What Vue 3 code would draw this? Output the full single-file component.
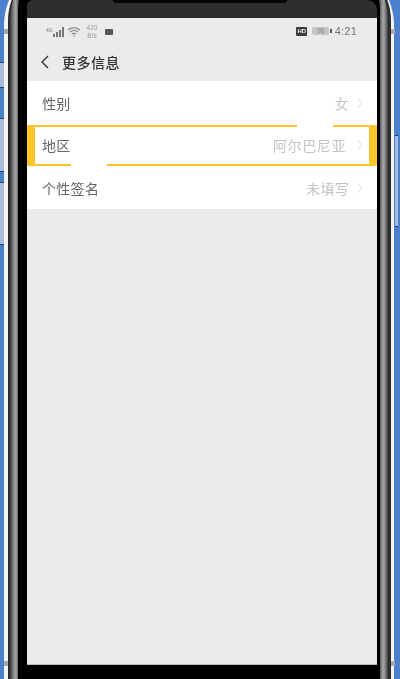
<script setup>
const rows = [
  { label: '性别', value: '女', cls: 'first' },
  { label: '地区', value: '阿尔巴尼亚', cls: 'hi' },
  { label: '个性签名', value: '未填写', cls: 'last' },
]
</script>

<template>
  <div class="stage">
    <div class="white-band">
      <div class="dark-band">
        <div class="metal">
          <div class="bezel">
            <div class="device">
              <div class="topband"><div class="notch"></div></div>
              <div class="screen">
                <div class="status">
                  <div class="status-left">
                    <svg class="signal" width="18" height="10" viewBox="0 0 18 10">
                      <text x="0" y="4.5" class="tiny">4G</text>
                      <rect x="7" y="7" width="2" height="3" fill="#777" />
                      <rect x="10" y="5" width="2" height="5" fill="#777" />
                      <rect x="13" y="3" width="2" height="7" fill="#777" />
                      <rect x="16" y="0" width="2" height="10" fill="#777" />
                    </svg>
                    <svg class="wifi" width="14" height="10" viewBox="0 0 14 10" fill="none" stroke="#777" stroke-width="1.1">
                      <path d="M1 3 Q7 -1.5 13 3" />
                      <path d="M3 5 Q7 2 11 5" />
                      <path d="M5 7 Q7 5.6 9 7" />
                      <circle cx="7" cy="9" r="0.7" fill="#777" stroke="none" />
                    </svg>
                    <div class="speed"><span>420</span><span>B/s</span></div>
                    <div class="square"></div>
                  </div>
                  <div class="status-right">
                    <span class="hd">HD</span>
                    <span class="battery"><span class="level">98</span><i class="cap"></i></span>
                    <span class="time">4:21</span>
                  </div>
                </div>
                <div class="nav">
                  <svg class="back" width="10" height="14" viewBox="0 0 10 14" fill="none" stroke="#333" stroke-width="1.4">
                    <path d="M8 1 L2 7 L8 13" />
                  </svg>
                  <span class="title">更多信息</span>
                </div>
                <div class="list">
                  <div v-for="r in rows" :key="r.label" class="row" :class="r.cls">
                    <span class="label">{{ r.label }}</span>
                    <span class="value">{{ r.value }}</span>
                    <svg class="chev" width="7" height="12" viewBox="0 0 7 12" fill="none" stroke="#d8d8d8" stroke-width="1">
                      <path d="M1 1 L6 6 L1 11" />
                    </svg>
                    <template v-if="r.cls === 'hi'">
                      <i class="gap gap-top"></i>
                      <i class="gap gap-bottom"></i>
                    </template>
                  </div>
                </div>
              </div>
            </div>
          </div>
        </div>
      </div>
    </div>
    <i class="tick tick-lt"></i>
    <i class="tick tick-lb"></i>
    <i class="tick tick-rt"></i>
    <i class="tick tick-rb"></i>
    <i class="panel p1"></i>
    <i class="panel p2"></i>
    <i class="panel p3"></i>
    <i class="panel p4"></i>
  </div>
</template>

<style>
html, body { margin: 0; background: #000; }
</style>

<style scoped>
.stage {
  width: 400px;
  height: 679px;
  overflow: hidden;
  position: relative;
  background: #4a80cc;
  padding: 0 6px 0 4px;
  box-sizing: border-box;
  font-family: "Noto Sans CJK SC", "Liberation Sans", sans-serif;
}
.white-band {
  margin-top: -40px;
  height: 780px;
  background: #f4f4f4;
  padding: 0 3px 0 4px;
  border-radius: 65px 65px 0 0;
}
.dark-band {
  height: 100%;
  background: #2c2c2c;
  padding: 0 3px 0 2px;
  border-radius: 61px 61px 0 0;
}
.metal {
  height: 100%;
  background: linear-gradient(90deg, #3a3a3a 0, #8f8f8f 4px, #a8a8a8 6px, #5a5a5a 8px, #5a5a5a calc(100% - 8px), #a8a8a8 calc(100% - 5px), #8a8a8a calc(100% - 3px), #3a3a3a 100%);
  padding: 0 8px;
  border-radius: 59px 59px 0 0;
}
.bezel {
  height: 100%;
  background: #000;
  padding: 0 3px 0 9px;
  border-radius: 50px 50px 0 0;
}
.device {
  padding-top: 40px;
  width: 350px;
}
.topband {
  height: 18px;
  background: #2e2e2e;
  position: relative;
  border-radius: 6px 10px 0 0;
}
.notch {
  position: absolute;
  left: 86px;
  top: 0;
  width: 174px;
  height: 3px;
  background: #050505;
  border-radius: 0 0 6px 6px;
}
.screen {
  width: 350px;
  height: 647px;
  background: #ebebeb;
  border-bottom: 1px solid #bbb;
  box-sizing: border-box;
}
.status {
  height: 26px;
  padding: 6px 20px 0 19px;
  box-sizing: border-box;
  display: flex;
  justify-content: space-between;
  align-items: flex-start;
  filter: blur(0.35px);
}
.status-left, .status-right {
  display: flex;
  align-items: center;
}
.status-left { gap: 3px; }
.tiny { font-size: 5px; fill: #777; font-family: "Liberation Sans", sans-serif; }
.speed {
  display: flex;
  flex-direction: column;
  font-family: "Liberation Sans", sans-serif;
  font-size: 6.5px;
  line-height: 8px;
  color: #999;
  margin-left: 1px;
  width: 14px;
  align-items: center;
}
.square {
  width: 8px;
  height: 6px;
  background: #555;
  margin-left: 3px;
  border-radius: 1px;
}
.status-right { gap: 5px; font-family: "Liberation Sans", sans-serif; }
.hd {
  background: #3a3a3a;
  color: #eee;
  font-size: 6px;
  font-weight: 700;
  line-height: 9px;
  width: 11px;
  text-align: center;
  border-radius: 1px;
}
.battery { display: flex; align-items: center; }
.level {
  width: 17px;
  height: 8px;
  background: #c4c4c4;
  border-radius: 2px;
  color: #888;
  font-size: 6.5px;
  line-height: 8px;
  text-align: center;
}
.cap { width: 1.5px; height: 4px; background: #555; margin-left: 1px; }
.time { font-size: 11px; line-height: 14px; color: #777; letter-spacing: 0.2px; margin-left: -2px; }
.nav {
  height: 36px;
  display: flex;
  align-items: center;
  padding-left: 13px;
  gap: 12px;
  box-sizing: border-box;
  filter: blur(0.35px);
}
.title {
  font-size: 14px;
  font-weight: 500;
  color: #333;
  letter-spacing: 0.5px;
}
.list { margin-top: 1px; }
.row {
  background: #fff;
  display: flex;
  align-items: center;
  padding: 0 14px 1px 15px;
  box-sizing: border-box;
  position: relative;
  color: #666;
  font-size: 14px;
}
.row.first { height: 44px; }
.row.last { height: 43px; padding-bottom: 0; }
.row.hi {
  height: 41px;
  border: 2px solid #fdc42b;
  border-left-width: 8px;
  border-right-width: 8px;
  border-radius: 2px;
  padding: 0 6px 1px 7px;
}
.label { flex: 1; letter-spacing: 0.3px; filter: blur(0.3px); }
.value { color: #c4c4c4; letter-spacing: 0.3px; margin-right: 7px; filter: blur(0.3px); }
.hi .value { letter-spacing: 0.6px; margin-right: 10px; }
.chev { flex: none; }
.gap {
  position: absolute;
  height: 3px;
  background: #fff;
  width: 36px;
}
.gap-top { top: -3px; right: 36px; }
.gap-bottom { bottom: -3px; left: 36px; }
.tick {
  position: absolute;
  width: 4px;
  height: 5px;
  background: #a8a8ae;
}
.tick-lt { left: 4px; top: 29px; }
.tick-lb { left: 4px; top: 661px; }
.tick-rt { left: 391px; top: 29px; }
.tick-rb { left: 391px; top: 661px; }
.panel {
  position: absolute;
  background: #a9bcdc;
  border-top: 1px solid #24406e;
  border-bottom: 1px solid #24406e;
}
.p1 { left: 0; width: 4px; top: 62px; height: 24px; }
.p2 { left: 0; width: 4px; top: 118px; height: 52px; }
.p3 { left: 0; width: 4px; top: 182px; height: 61px; }
.p4 { left: 395px; width: 3px; top: 135px; height: 90px; }
</style>
